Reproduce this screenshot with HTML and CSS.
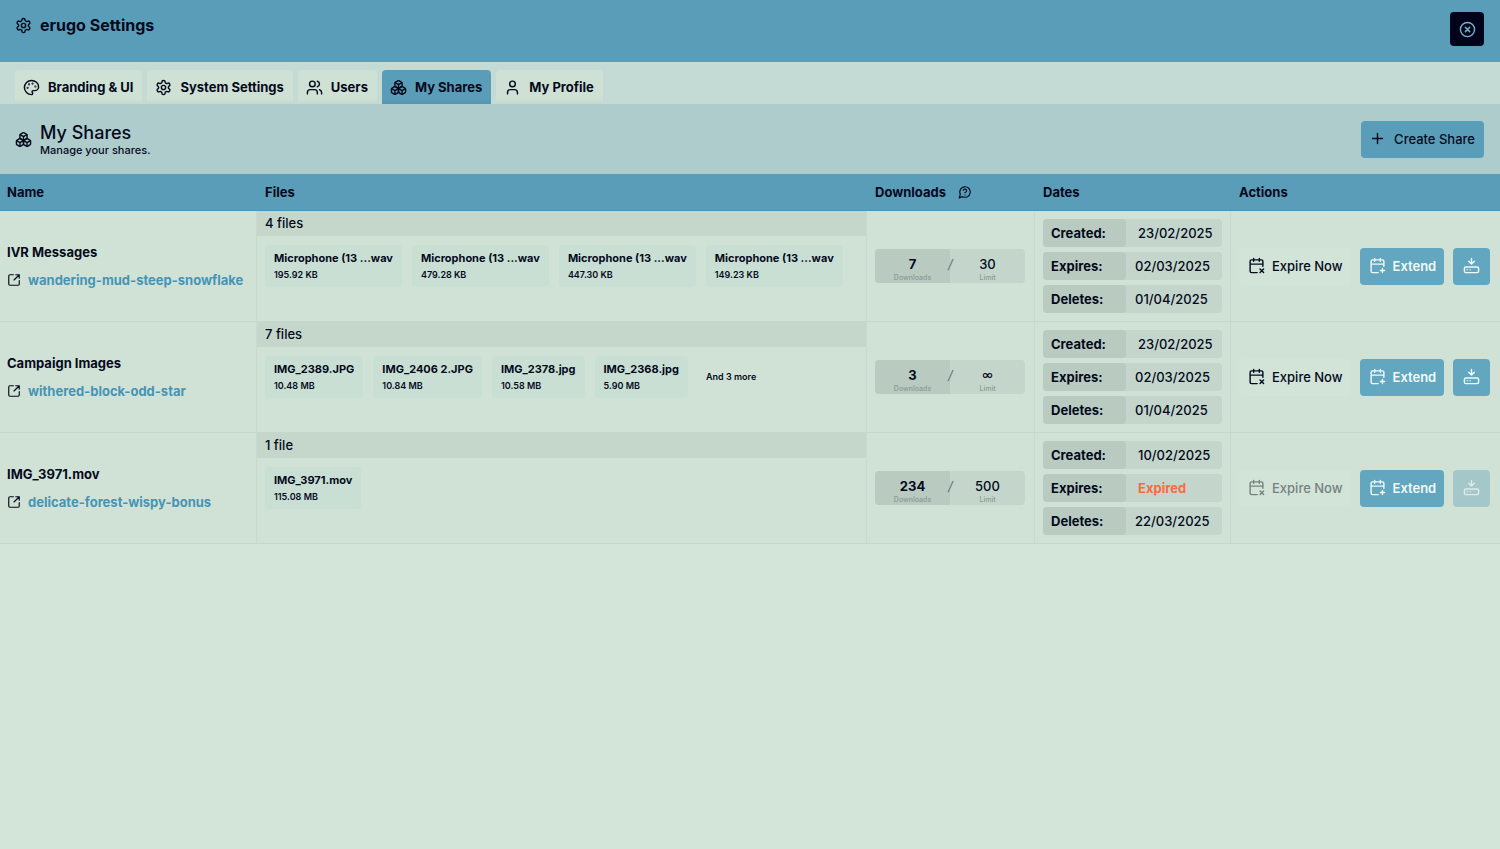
FILE: index.html
```html
<!DOCTYPE html>
<html lang="en">
<head>
<meta charset="utf-8">
<title>erugo Settings</title>
<link rel="stylesheet" href="styles.css">
</head>
<body>
<svg class="sprite" aria-hidden="true">
  <symbol id="gear" viewBox="0 0 24 24"><path d="M12.22 2h-.44a2 2 0 0 0-2 2v.18a2 2 0 0 1-1 1.73l-.43.25a2 2 0 0 1-2 0l-.15-.08a2 2 0 0 0-2.73.73l-.22.38a2 2 0 0 0 .73 2.73l.15.1a2 2 0 0 1 1 1.72v.51a2 2 0 0 1-1 1.74l-.15.09a2 2 0 0 0-.73 2.73l.22.38a2 2 0 0 0 2.73.73l.15-.08a2 2 0 0 1 2 0l.43.25a2 2 0 0 1 1 1.73V20a2 2 0 0 0 2 2h.44a2 2 0 0 0 2-2v-.18a2 2 0 0 1 1-1.73l.43-.25a2 2 0 0 1 2 0l.15.08a2 2 0 0 0 2.73-.73l.22-.39a2 2 0 0 0-.73-2.73l-.15-.08a2 2 0 0 1-1-1.74v-.5a2 2 0 0 1 1-1.74l.15-.09a2 2 0 0 0 .73-2.73l-.22-.38a2 2 0 0 0-2.73-.73l-.15.08a2 2 0 0 1-2 0l-.43-.25a2 2 0 0 1-1-1.73V4a2 2 0 0 0-2-2z"/><circle cx="12" cy="12" r="3"/></symbol>
  <symbol id="palette" viewBox="0 0 24 24"><circle cx="13.5" cy="6.5" r=".5"/><circle cx="17.5" cy="10.5" r=".5"/><circle cx="8.5" cy="7.5" r=".5"/><circle cx="6.5" cy="12.5" r=".5"/><path d="M12 2C6.5 2 2 6.5 2 12s4.5 10 10 10c.926 0 1.648-.746 1.648-1.688 0-.437-.18-.835-.437-1.125-.29-.289-.438-.652-.438-1.125a1.64 1.64 0 0 1 1.668-1.668h1.996c3.051 0 5.555-2.503 5.555-5.554C21.965 6.012 17.461 2 12 2z"/></symbol>
  <symbol id="users" viewBox="0 0 24 24"><path d="M16 21v-2a4 4 0 0 0-4-4H6a4 4 0 0 0-4 4v2"/><circle cx="9" cy="7" r="4"/><path d="M22 21v-2a4 4 0 0 0-3-3.87M16 3.13a4 4 0 0 1 0 7.75"/></symbol>
  <symbol id="user" viewBox="0 0 24 24"><path d="M19 21v-2a4 4 0 0 0-4-4H9a4 4 0 0 0-4 4v2"/><circle cx="12" cy="7" r="4"/></symbol>
  <symbol id="boxes" viewBox="0 0 24 24"><path d="M2.97 12.92A2 2 0 0 0 2 14.63v3.24a2 2 0 0 0 .97 1.71l3 1.8a2 2 0 0 0 2.06 0L12 19v-5.5l-5-3-4.03 2.42Z"/><path d="m7 16.5-4.74-2.85M7 16.5l5-3M7 16.5v5.17"/><path d="M12 13.5V19l3.97 2.38a2 2 0 0 0 2.06 0l3-1.8a2 2 0 0 0 .97-1.71v-3.24a2 2 0 0 0-.97-1.71L17 10.5l-5 3Z"/><path d="m17 16.5-5-3M17 16.5l4.74-2.85M17 16.5v5.17"/><path d="M7.97 4.42A2 2 0 0 0 7 6.13v4.37l5 3 5-3V6.13a2 2 0 0 0-.97-1.71l-3-1.8a2 2 0 0 0-2.06 0l-3 1.8Z"/><path d="M12 8 7.26 5.15M12 8l4.74-2.85M12 13.5V8"/></symbol>
  <symbol id="close" viewBox="0 0 24 24"><circle cx="12" cy="12" r="10"/><path d="m15 9-6 6M9 9l6 6"/></symbol>
  <symbol id="plus" viewBox="0 0 24 24"><path d="M5 12h14M12 5v14"/></symbol>
  <symbol id="help" viewBox="0 0 24 24"><path d="M7.9 20A9 9 0 1 0 4 16.1L2 22Z"/><path d="M9.09 9a3 3 0 0 1 5.83 1c0 2-3 3-3 3M12 17h.01"/></symbol>
  <symbol id="open" viewBox="0 0 24 24"><path d="M21 13v6a2 2 0 0 1-2 2H5a2 2 0 0 1-2-2V5a2 2 0 0 1 2-2h6M21 3l-9 9M15 3h6v6"/></symbol>
  <symbol id="cal-x" viewBox="0 0 24 24"><path d="M8 2v4M16 2v4M21 13V6a2 2 0 0 0-2-2H5a2 2 0 0 0-2 2v14a2 2 0 0 0 2 2h8M3 10h18M17 22l5-5M17 17l5 5"/></symbol>
  <symbol id="cal-plus" viewBox="0 0 24 24"><path d="M8 2v4M16 2v4M21 13V6a2 2 0 0 0-2-2H5a2 2 0 0 0-2 2v14a2 2 0 0 0 2 2h8M3 10h18M16 19h6M19 16v6"/></symbol>
  <symbol id="drive" viewBox="0 0 24 24"><path d="M12 2v8M16 6l-4 4-4-4"/><rect x="2" y="14" width="20" height="8" rx="2"/><path d="M6 18h.01M10 18h.01"/></symbol>
</svg>

<header class="topbar">
  <h1 class="topbar-title"><svg class="icon"><use href="#gear"/></svg>erugo Settings</h1>
  <button class="close" aria-label="Close settings"><svg class="icon"><use href="#close"/></svg></button>
</header>

<nav class="tabs" aria-label="Settings sections">
  <button class="tab"><svg class="icon"><use href="#palette"/></svg>Branding &amp; UI</button>
  <button class="tab"><svg class="icon"><use href="#gear"/></svg>System Settings</button>
  <button class="tab"><svg class="icon"><use href="#users"/></svg>Users</button>
  <button class="tab tab-active" aria-current="page"><svg class="icon"><use href="#boxes"/></svg>My Shares</button>
  <button class="tab"><svg class="icon"><use href="#user"/></svg>My Profile</button>
</nav>

<main>
  <section class="intro">
    <svg class="icon"><use href="#boxes"/></svg>
    <div class="intro-text">
      <h2>My Shares</h2>
      <p>Manage your shares.</p>
    </div>
    <button class="btn btn-create"><svg class="icon"><use href="#plus"/></svg>Create Share</button>
  </section>

  <table class="shares">
    <colgroup><col class="col-name"><col><col class="col-downloads"><col class="col-dates"><col class="col-actions"></colgroup>
    <thead>
      <tr><th>Name</th><th>Files</th><th><span class="th-help">Downloads<svg class="icon icon-small"><use href="#help"/></svg></span></th><th>Dates</th><th>Actions</th></tr>
    </thead>
    <tbody>
      <tr>
        <td>
          <div class="share-name">IVR Messages</div>
          <a class="share-link" href="#"><svg class="icon icon-link"><use href="#open"/></svg>wandering-mud-steep-snowflake</a>
        </td>
        <td class="files-cell">
          <div class="files-count">4 files</div>
          <ul class="files">
            <li class="file"><b>Microphone (13 ...wav</b><span>195.92 KB</span></li>
            <li class="file"><b>Microphone (13 ...wav</b><span>479.28 KB</span></li>
            <li class="file"><b>Microphone (13 ...wav</b><span>447.30 KB</span></li>
            <li class="file"><b>Microphone (13 ...wav</b><span>149.23 KB</span></li>
          </ul>
        </td>
        <td>
          <div class="meter"><div class="meter-used"><b>7</b><small>Downloads</small></div><i>/</i><div class="meter-limit"><span>30</span><small>Limit</small></div></div>
        </td>
        <td>
          <dl class="dates">
            <div class="date date-created"><dt>Created:</dt><dd>23/02/2025</dd></div>
            <div class="date"><dt>Expires:</dt><dd>02/03/2025</dd></div>
            <div class="date"><dt>Deletes:</dt><dd>01/04/2025</dd></div>
          </dl>
        </td>
        <td>
          <div class="actions">
            <button class="btn btn-plain"><svg class="icon"><use href="#cal-x"/></svg>Expire Now</button>
            <button class="btn btn-blue"><svg class="icon"><use href="#cal-plus"/></svg>Extend</button>
            <button class="btn btn-blue btn-icon" aria-label="Download"><svg class="icon"><use href="#drive"/></svg></button>
          </div>
        </td>
      </tr>
      <tr>
        <td>
          <div class="share-name">Campaign Images</div>
          <a class="share-link" href="#"><svg class="icon icon-link"><use href="#open"/></svg>withered-block-odd-star</a>
        </td>
        <td class="files-cell">
          <div class="files-count">7 files</div>
          <ul class="files">
            <li class="file"><b>IMG_2389.JPG</b><span>10.48 MB</span></li>
            <li class="file"><b>IMG_2406 2.JPG</b><span>10.84 MB</span></li>
            <li class="file"><b>IMG_2378.jpg</b><span>10.58 MB</span></li>
            <li class="file"><b>IMG_2368.jpg</b><span>5.90 MB</span></li>
            <li class="files-more">And 3 more</li>
          </ul>
        </td>
        <td>
          <div class="meter"><div class="meter-used"><b>3</b><small>Downloads</small></div><i>/</i><div class="meter-limit"><span class="infinite">∞</span><small>Limit</small></div></div>
        </td>
        <td>
          <dl class="dates">
            <div class="date date-created"><dt>Created:</dt><dd>23/02/2025</dd></div>
            <div class="date"><dt>Expires:</dt><dd>02/03/2025</dd></div>
            <div class="date"><dt>Deletes:</dt><dd>01/04/2025</dd></div>
          </dl>
        </td>
        <td>
          <div class="actions">
            <button class="btn btn-plain"><svg class="icon"><use href="#cal-x"/></svg>Expire Now</button>
            <button class="btn btn-blue"><svg class="icon"><use href="#cal-plus"/></svg>Extend</button>
            <button class="btn btn-blue btn-icon" aria-label="Download"><svg class="icon"><use href="#drive"/></svg></button>
          </div>
        </td>
      </tr>
      <tr>
        <td>
          <div class="share-name">IMG_3971.mov</div>
          <a class="share-link" href="#"><svg class="icon icon-link"><use href="#open"/></svg>delicate-forest-wispy-bonus</a>
        </td>
        <td class="files-cell">
          <div class="files-count">1 file</div>
          <ul class="files">
            <li class="file"><b>IMG_3971.mov</b><span>115.08 MB</span></li>
          </ul>
        </td>
        <td>
          <div class="meter"><div class="meter-used"><b>234</b><small>Downloads</small></div><i>/</i><div class="meter-limit"><span>500</span><small>Limit</small></div></div>
        </td>
        <td>
          <dl class="dates">
            <div class="date date-created"><dt>Created:</dt><dd>10/02/2025</dd></div>
            <div class="date date-expired"><dt>Expires:</dt><dd>Expired</dd></div>
            <div class="date"><dt>Deletes:</dt><dd>22/03/2025</dd></div>
          </dl>
        </td>
        <td>
          <div class="actions">
            <button class="btn btn-plain" disabled><svg class="icon"><use href="#cal-x"/></svg>Expire Now</button>
            <button class="btn btn-blue"><svg class="icon"><use href="#cal-plus"/></svg>Extend</button>
            <button class="btn btn-blue btn-icon" aria-label="Download" disabled><svg class="icon"><use href="#drive"/></svg></button>
          </div>
        </td>
      </tr>
    </tbody>
  </table>
</main>
</body>
</html>
```
FILE: styles.css
```css
* { box-sizing: border-box; }

body {
  margin: 0;
  min-height: 100vh;
  background: #d3e4d9;
  color: #040a1c;
  font: 500 13px/20px Inter, "Liberation Sans", sans-serif;
}

h1, h2, p, ul, dl, dd { margin: 0; padding: 0; }
ul { list-style: none; }
button { font: inherit; color: inherit; border: 0; cursor: pointer; }
button:disabled { cursor: default; }

.sprite { display: none; }

.icon {
  width: 17px;
  height: 17px;
  flex: none;
  fill: none;
  stroke: currentColor;
  stroke-width: 2;
  stroke-linecap: round;
  stroke-linejoin: round;
}
.icon-small { width: 14px; height: 14px; }
.icon-link { width: 14px; height: 14px; color: #040a1c; }

/* Top bar */
.topbar {
  display: flex;
  justify-content: space-between;
  align-items: flex-start;
  height: 62px;
  padding: 12px 16px 0 15px;
  background: #5a9db8;
}
.topbar-title {
  display: flex;
  align-items: center;
  gap: 8px;
  font-size: 16px;
  line-height: 27px;
  font-weight: 700;
}
.close {
  display: grid;
  place-items: center;
  width: 34px;
  height: 34px;
  padding: 0;
  border-radius: 4px;
  background: #02031a;
  color: #6bb3cc;
}

/* Tabs */
.tabs {
  display: flex;
  gap: 5px;
  height: 42px;
  padding: 8px 15px 0;
  background: #c3dad5;
}
.tab {
  display: flex;
  align-items: center;
  gap: 8px;
  padding: 0 9px 0 8px;
  border-radius: 4px 4px 0 0;
  background: linear-gradient(#cfe1d5 85%, #c6d8cc);
  font-weight: 700;
  white-space: nowrap;
}
.tab-active { background: linear-gradient(#5a9db8 85%, #5495b0); }

/* Section intro */
.intro {
  display: flex;
  align-items: center;
  gap: 8px;
  height: 70px;
  padding: 0 16px 0 15px;
  background: #adcccb;
}
.intro-text { flex: 1; padding-top: 2px; }
.intro h2 { font-size: 18px; line-height: 20px; font-weight: 500; }
.intro p { font-size: 11px; line-height: 15px; font-weight: 500; }

.btn {
  display: flex;
  align-items: center;
  gap: 7px;
  height: 37px;
  padding: 0 8px 0 9px;
  border-radius: 4px;
  white-space: nowrap;
}
.btn .icon { margin-bottom: 2px; }
.btn-create { gap: 8px; padding: 0 9px 0 8px; background: #5a9db8; }
.btn-plain { background: #d2e3d7; }
.btn-plain:disabled { color: #75827f; }
.btn-blue { background: #62a7bf; color: #f1faf8; font-weight: 600; }
.btn-blue:disabled { background: #a4c8c9; color: #deece5; }
.btn-icon { justify-content: center; width: 37px; padding: 0; }

/* Shares table */
.shares {
  width: 100%;
  table-layout: fixed;
  border-collapse: separate;
  border-spacing: 0;
}
.col-name { width: 256px; }
.col-downloads { width: 168px; }
.col-dates { width: 196px; }
.col-actions { width: 270px; }

.shares th {
  height: 37px;
  padding: 0 7px;
  background: #5a9db8;
  border-bottom: 1px solid #4c93b1;
  text-align: left;
  font-weight: 700;
}
.th-help { display: flex; align-items: center; gap: 12px; }

.shares td {
  height: 111px;
  padding: 8px 7px;
  background: #d0e2d6;
  border-bottom: 1px solid #c6d8cd;
}
.shares td + td { padding: 8px; border-left: 1px solid #c8dacf; }
.shares th + th { padding-left: 9px; }

.share-name { padding-bottom: 8px; font-weight: 700; }
.share-link {
  display: flex;
  align-items: center;
  gap: 7px;
  color: #4694b5;
  font-weight: 700;
  text-decoration: none;
  white-space: nowrap;
}

.shares .files-cell { padding: 0; vertical-align: top; }
.files-count {
  height: 25px;
  padding: 0 8px;
  background: #c5d6ca;
  line-height: 25px;
}
.files { display: flex; gap: 10px; padding: 9px 8px; }
.file {
  padding: 4px 9px;
  border-radius: 4px;
  background: #c9dfd4;
  white-space: nowrap;
}
.file b { display: block; font-size: 11px; line-height: 18px; font-weight: 700; }
.file span { display: block; font-size: 9px; line-height: 16px; font-weight: 600; }
.files-more { align-self: center; padding-left: 8px; font-size: 9px; font-weight: 600; }

.meter {
  display: flex;
  width: 150px;
  height: 34px;
  border-radius: 4px;
  background: #c4d5cb;
  text-align: center;
}
.meter-used, .meter-limit { flex: 1; padding-top: 7px; }
.meter-used { border-radius: 4px 0 0 4px; background: #b9cac1; }
.meter b, .meter span { display: block; line-height: 17px; }
.meter b { font-weight: 700; }
.meter small { display: block; color: #8b9b96; font-size: 7px; line-height: 9px; }
.meter i { width: 4px; margin: 0 -2px; padding-top: 7px; color: #6f7d7c; line-height: 17px; }
.meter .infinite { font-size: 11px; }

.dates { display: grid; gap: 5px; }
.date {
  display: flex;
  border-radius: 4px;
  background: #c4d5cb;
  line-height: 28px;
}
.date dt {
  width: 83px;
  padding-left: 8px;
  border-radius: 4px;
  background: #b9cac1;
  font-weight: 700;
}
.date dd { padding-left: 9px; }
.date-created dd, .date-expired dd { padding-left: 12px; }
.date-expired dd { color: #ff6845; font-weight: 700; }

.actions { display: flex; gap: 9px; }
.actions .btn { flex: none; }
```
